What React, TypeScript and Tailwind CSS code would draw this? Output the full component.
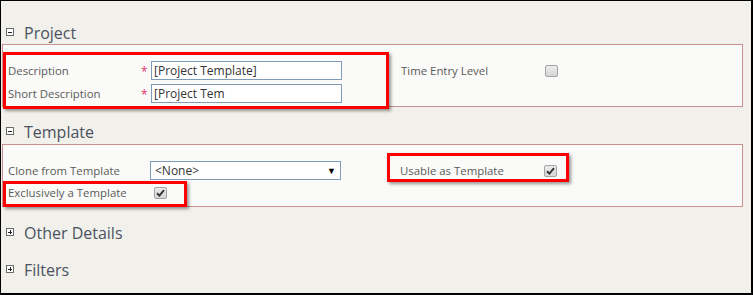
import React from 'react';

const font = "font-['Open_Sans','Liberation_Sans',sans-serif]";

const ToggleBox = ({ open }: { open: boolean }) => (
  <span className="relative mt-[6px] ml-[5px] h-[8px] w-[8px] shrink-0 border border-[#6b6b6b] bg-white">
    <span className="absolute left-[1px] top-[2.5px] h-[1px] w-[4px] bg-[#222]" />
    {!open && <span className="absolute left-[2.5px] top-[1px] h-[4px] w-[1px] bg-[#222]" />}
  </span>
);

const SectionHeader = ({ title, open, className }: { title: string; open: boolean; className: string }) => (
  <div className={`flex h-[22px] ${className}`}>
    <ToggleBox open={open} />
    <span className="ml-[10px] text-[16px] leading-[22px] text-[#4b5261]">{title}</span>
  </div>
);

const Checkbox = ({ checked }: { checked?: boolean }) => (
  <span className="flex h-[12px] w-[13px] items-center justify-center rounded-[2px] border border-[#a3a3a3] bg-gradient-to-b from-[#ececec] to-[#d6d6d6]">
    {checked && (
      <svg width="9" height="8" viewBox="0 0 9 8">
        <path d="M1 4.3 L3.4 6.6 L8 1.2" fill="none" stroke="#333" strokeWidth="1.9" />
      </svg>
    )}
  </span>
);

const TextInput = ({ value }: { value: string }) => (
  <div className="flex h-[19px] w-[191px] items-center border border-[#7f9dbb] bg-white pl-[2px] text-[12px] text-[#333]">
    {value}
  </div>
);

const Label = ({ children, className = '' }: { children: React.ReactNode; className?: string }) => (
  <span className={`text-[11.4px] text-[#5a5a5a] ${className}`}>{children}</span>
);

const Required = () => <span className="w-[10px] pt-[2px] text-[12px] leading-none text-[#e4336b]">*</span>;

// annotation frames drawn over the form
const Highlight = ({ className }: { className: string }) => (
  <div className={`absolute border-[3px] border-[#ff0000] shadow-[2px_2px_3px_rgba(0,0,0,0.4)] ${className}`} />
);

const App: React.FC = () => {
  return (
    <div className={`relative h-[295px] w-[753px] overflow-hidden border-t border-l border-r-2 border-b-2 border-black bg-[#f1f0ea] ${font}`}>
      <SectionHeader title="Project" open className="mt-[21px]" />
      <div className="ml-[1px] h-[63px] w-[741px] border border-[#c8918f] bg-[#fafaf8] pt-[16px] pl-[5px]">
        <div className="flex h-[19px] items-center">
          <Label className="w-[133px]">Description</Label>
          <Required />
          <TextInput value="[Project Template]" />
          <Label className="ml-[59px] w-[144px]">Time Entry Level</Label>
          <Checkbox />
        </div>
        <div className="mt-[4px] flex h-[19px] items-center">
          <Label className="w-[133px]">Short Description</Label>
          <Required />
          <TextInput value="[Project Tem" />
        </div>
      </div>

      <SectionHeader title="Template" open className="mt-[14px] mb-[1px]" />
      <div className="ml-[1px] h-[63px] w-[741px] border border-[#c8918f] bg-[#fafaf8] pt-[16px] pl-[5px]">
        <div className="flex h-[19px] items-center">
          <Label className="w-[142px]">Clone from Template</Label>
          <div className="flex h-[19px] w-[191px] items-center justify-between border border-[#7f9dbb] bg-white pl-[4px] pr-[4px] text-[12px] text-[#333]">
            <span>&lt;None&gt;</span>
            <span className="text-[9px] text-black">▼</span>
          </div>
          <Label className="ml-[59px] w-[144px]">Usable as Template</Label>
          <Checkbox checked />
        </div>
        <div className="mt-[3px] flex h-[19px] items-center">
          <Label className="w-[146px]">Exclusively a Template</Label>
          <Checkbox checked />
        </div>
      </div>

      <SectionHeader title="Other Details" open={false} className="mt-[15px]" />
      <SectionHeader title="Filters" open={false} className="mt-[15px]" />

      <Highlight className="left-[2px] top-[51px] h-[57px] w-[386px]" />
      <Highlight className="left-[386px] top-[152px] h-[29px] w-[182px]" />
      <Highlight className="left-[2px] top-[180px] h-[26px] w-[184px]" />
    </div>
  );
};

export default App;
